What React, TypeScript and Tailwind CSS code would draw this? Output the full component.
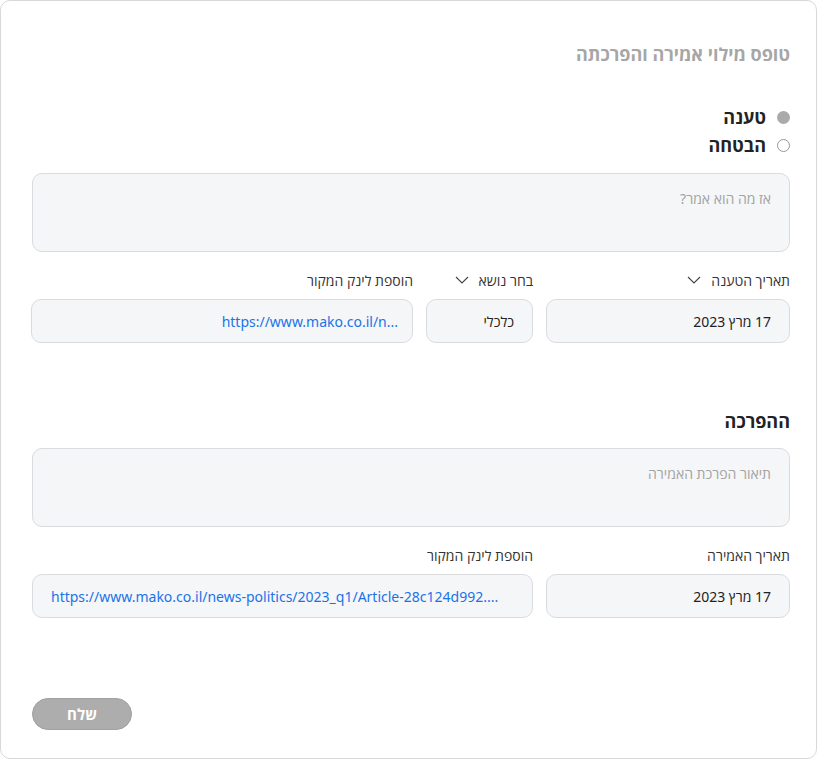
const font = { fontFamily: '"Noto Sans", "Open Sans", sans-serif' };

function Field({
  children,
  link,
  className = "",
}: {
  children: React.ReactNode;
  link?: boolean;
  className?: string;
}) {
  return (
    <div
      className={`h-[44px] flex items-center px-[18px] rounded-[10px] border border-[#d9dbdf] bg-[#f5f6f8] text-[14px] ${
        link ? "text-[#1a73e8]" : "text-[#222]"
      } ${className}`}
    >
      {children}
    </div>
  );
}

function Chevron() {
  return (
    <svg width="14" height="8" viewBox="0 0 14 8" fill="none" className="text-[#444]">
      <polyline points="1,1 7,7 13,1" stroke="currentColor" strokeWidth="1.1" />
    </svg>
  );
}

function Label({ text, chevron }: { text: string; chevron?: boolean }) {
  return (
    <div className="h-[20px] mb-[9px] flex items-center gap-[10px] text-[14px] text-[#333]">
      <span>{text}</span>
      {chevron && <Chevron />}
    </div>
  );
}

export default function App() {
  return (
    <div dir="rtl" style={font} className="w-[817px] h-[759px] bg-white">
      <div className="h-full border border-[#d8d8d8] rounded-[10px] pr-[26px] pl-[31px] pt-[40px]">
        <h1 className="text-[18px] leading-[27px] font-bold text-[#a6a6a6]">טופס מילוי אמירה והפרכתה</h1>

        {/* Claim type */}
        <div className="mt-[35px] flex flex-col">
          <label className="h-[28px] flex items-center gap-[11px] text-[18px] font-bold text-[#222]">
            <span className="w-[13px] h-[13px] rounded-full bg-[#aaaaaa]" />
            טענה
          </label>
          <label className="h-[28px] flex items-center gap-[11px] text-[18px] font-bold text-[#222]">
            <span className="w-[13px] h-[13px] rounded-full border border-[#999] bg-white" />
            הבטחה
          </label>
        </div>

        <div className="mt-[14px] h-[79px] rounded-[10px] border border-[#d9dbdf] bg-[#f5f6f8] px-[18px] pt-[14px] text-[14px] text-[#a3a3a3]">
          אז מה הוא אמר?
        </div>

        <div className="mt-[18px] flex gap-[13px]">
          <div className="w-[244px]">
            <Label text="תאריך הטענה" chevron />
            <Field>17 מרץ 2023</Field>
          </div>
          <div className="w-[107px]">
            <Label text="בחר נושא" chevron />
            <Field>כלכלי</Field>
          </div>
          <div className="flex-1 ml-[-1px]">
            <Label text="הוספת לינק המקור" />
            <Field link className="pr-[14px]">
              <span dir="ltr">https://www.mako.co.il/n...</span>
            </Field>
          </div>
        </div>

        <h2 className="mt-[65px] text-[18px] leading-[27px] font-bold text-[#222]">ההפרכה</h2>

        <div className="mt-[13px] h-[79px] rounded-[10px] border border-[#d9dbdf] bg-[#f5f6f8] px-[18px] pt-[14px] text-[14px] text-[#a3a3a3]">
          תיאור הפרכת האמירה
        </div>

        <div className="mt-[18px] flex gap-[13px]">
          <div className="w-[244px]">
            <Label text="תאריך האמירה" />
            <Field>17 מרץ 2023</Field>
          </div>
          <div className="flex-1">
            <Label text="הוספת לינק המקור" />
            <Field link className="justify-end">
              <span dir="ltr">https://www.mako.co.il/news-politics/2023_q1/Article-28c124d992....</span>
            </Field>
          </div>
        </div>

        <div className="mt-[80px] flex justify-end">
          <button className="w-[100px] h-[32px] rounded-full bg-[#adadad] border border-[#a0a0a0] text-white text-[15px] font-bold">
            שלח
          </button>
        </div>
      </div>
    </div>
  );
}
